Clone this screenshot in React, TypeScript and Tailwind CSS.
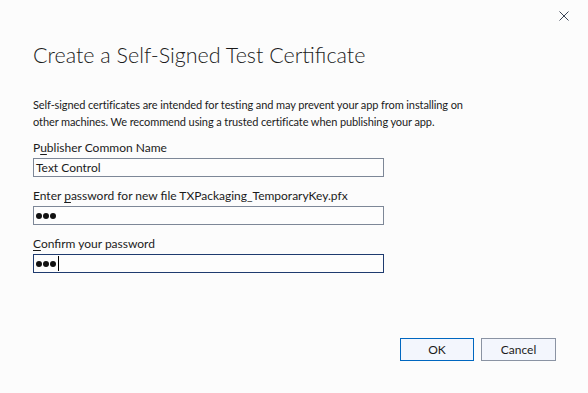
import React from "react";

const font = { fontFamily: 'Lato, "Noto Sans", sans-serif' };

function Field({ label, accessKey, value, password, focused }: { label: string; accessKey: number; value: string; password?: boolean; focused?: boolean }) {
  return (
    <div className="flex flex-col">
      <div className="text-[12px] leading-[16px] text-[#1b1b1b]">
        {label.slice(0, accessKey)}
        <span className="underline underline-offset-2">{label[accessKey]}</span>
        {label.slice(accessKey + 1)}
      </div>
      <div
        className={`mt-[2px] h-[19px] w-[351px] border flex items-center pl-[2px] ${
          focused ? "border-[#1f3b6f]" : "border-[#7d8797]"
        } bg-[#fdfdfd]`}
      >
        {password ? (
          <span className="flex items-center gap-[1px]">
            {value.split("").map((_, i) => (
              <span key={i} className="w-[6px] h-[6px] rounded-full bg-[#111]" />
            ))}
            {focused && <span className="ml-[1px] w-[1px] h-[15px] bg-black" />}
          </span>
        ) : (
          <span className="text-[12px] leading-[16px] text-[#1b1b1b]">{value}</span>
        )}
      </div>
    </div>
  );
}

export default function App() {
  return (
    <div className="w-[588px] h-[393px] bg-[#fcfcfc] flex flex-col relative overflow-hidden" style={font}>
      <div className="flex justify-end pt-[10px] pr-[18px]">
        <svg width="12" height="12" viewBox="0 0 12 12" className="text-[#3a4456]">
          <path d="M1.5 1.5 L10.5 10.5 M10.5 1.5 L1.5 10.5" stroke="currentColor" strokeWidth="1" fill="none" />
        </svg>
      </div>
      <div className="px-[33px] flex flex-col">
        <h1 className="mt-[18px] text-[21.5px] leading-[30px] font-light text-[#1b1b1b]">
          Create a Self-Signed Test Certificate
        </h1>
        <p className="mt-[26px] text-[11px] leading-[17px] tracking-[-0.1px] text-[#1b1b1b]">
          Self-signed certificates are intended for testing and may prevent your app from installing on
          <br />
          other machines. We recommend using a trusted certificate when publishing your app.
        </p>
        <div className="mt-[10px] flex flex-col gap-[11px]">
          <Field label="Publisher Common Name" accessKey={1} value="Text Control" />
          <Field label="Enter password for new file TXPackaging_TemporaryKey.pfx" accessKey={6} value="abc" password />
          <Field label="Confirm your password" accessKey={0} value="abc" password focused />
        </div>
      </div>
      <div className="mt-auto mb-[32px] flex justify-end gap-[7px] pr-[32px]">
        <button className="w-[74px] h-[23px] border border-[#0067c0] bg-[#f3f6fd] text-[12px] text-[#1b1b1b]">OK</button>
        <button className="w-[75px] h-[23px] border border-[#8a93a3] bg-[#f3f6fd] text-[12px] text-[#1b1b1b]">Cancel</button>
      </div>
    </div>
  );
}
